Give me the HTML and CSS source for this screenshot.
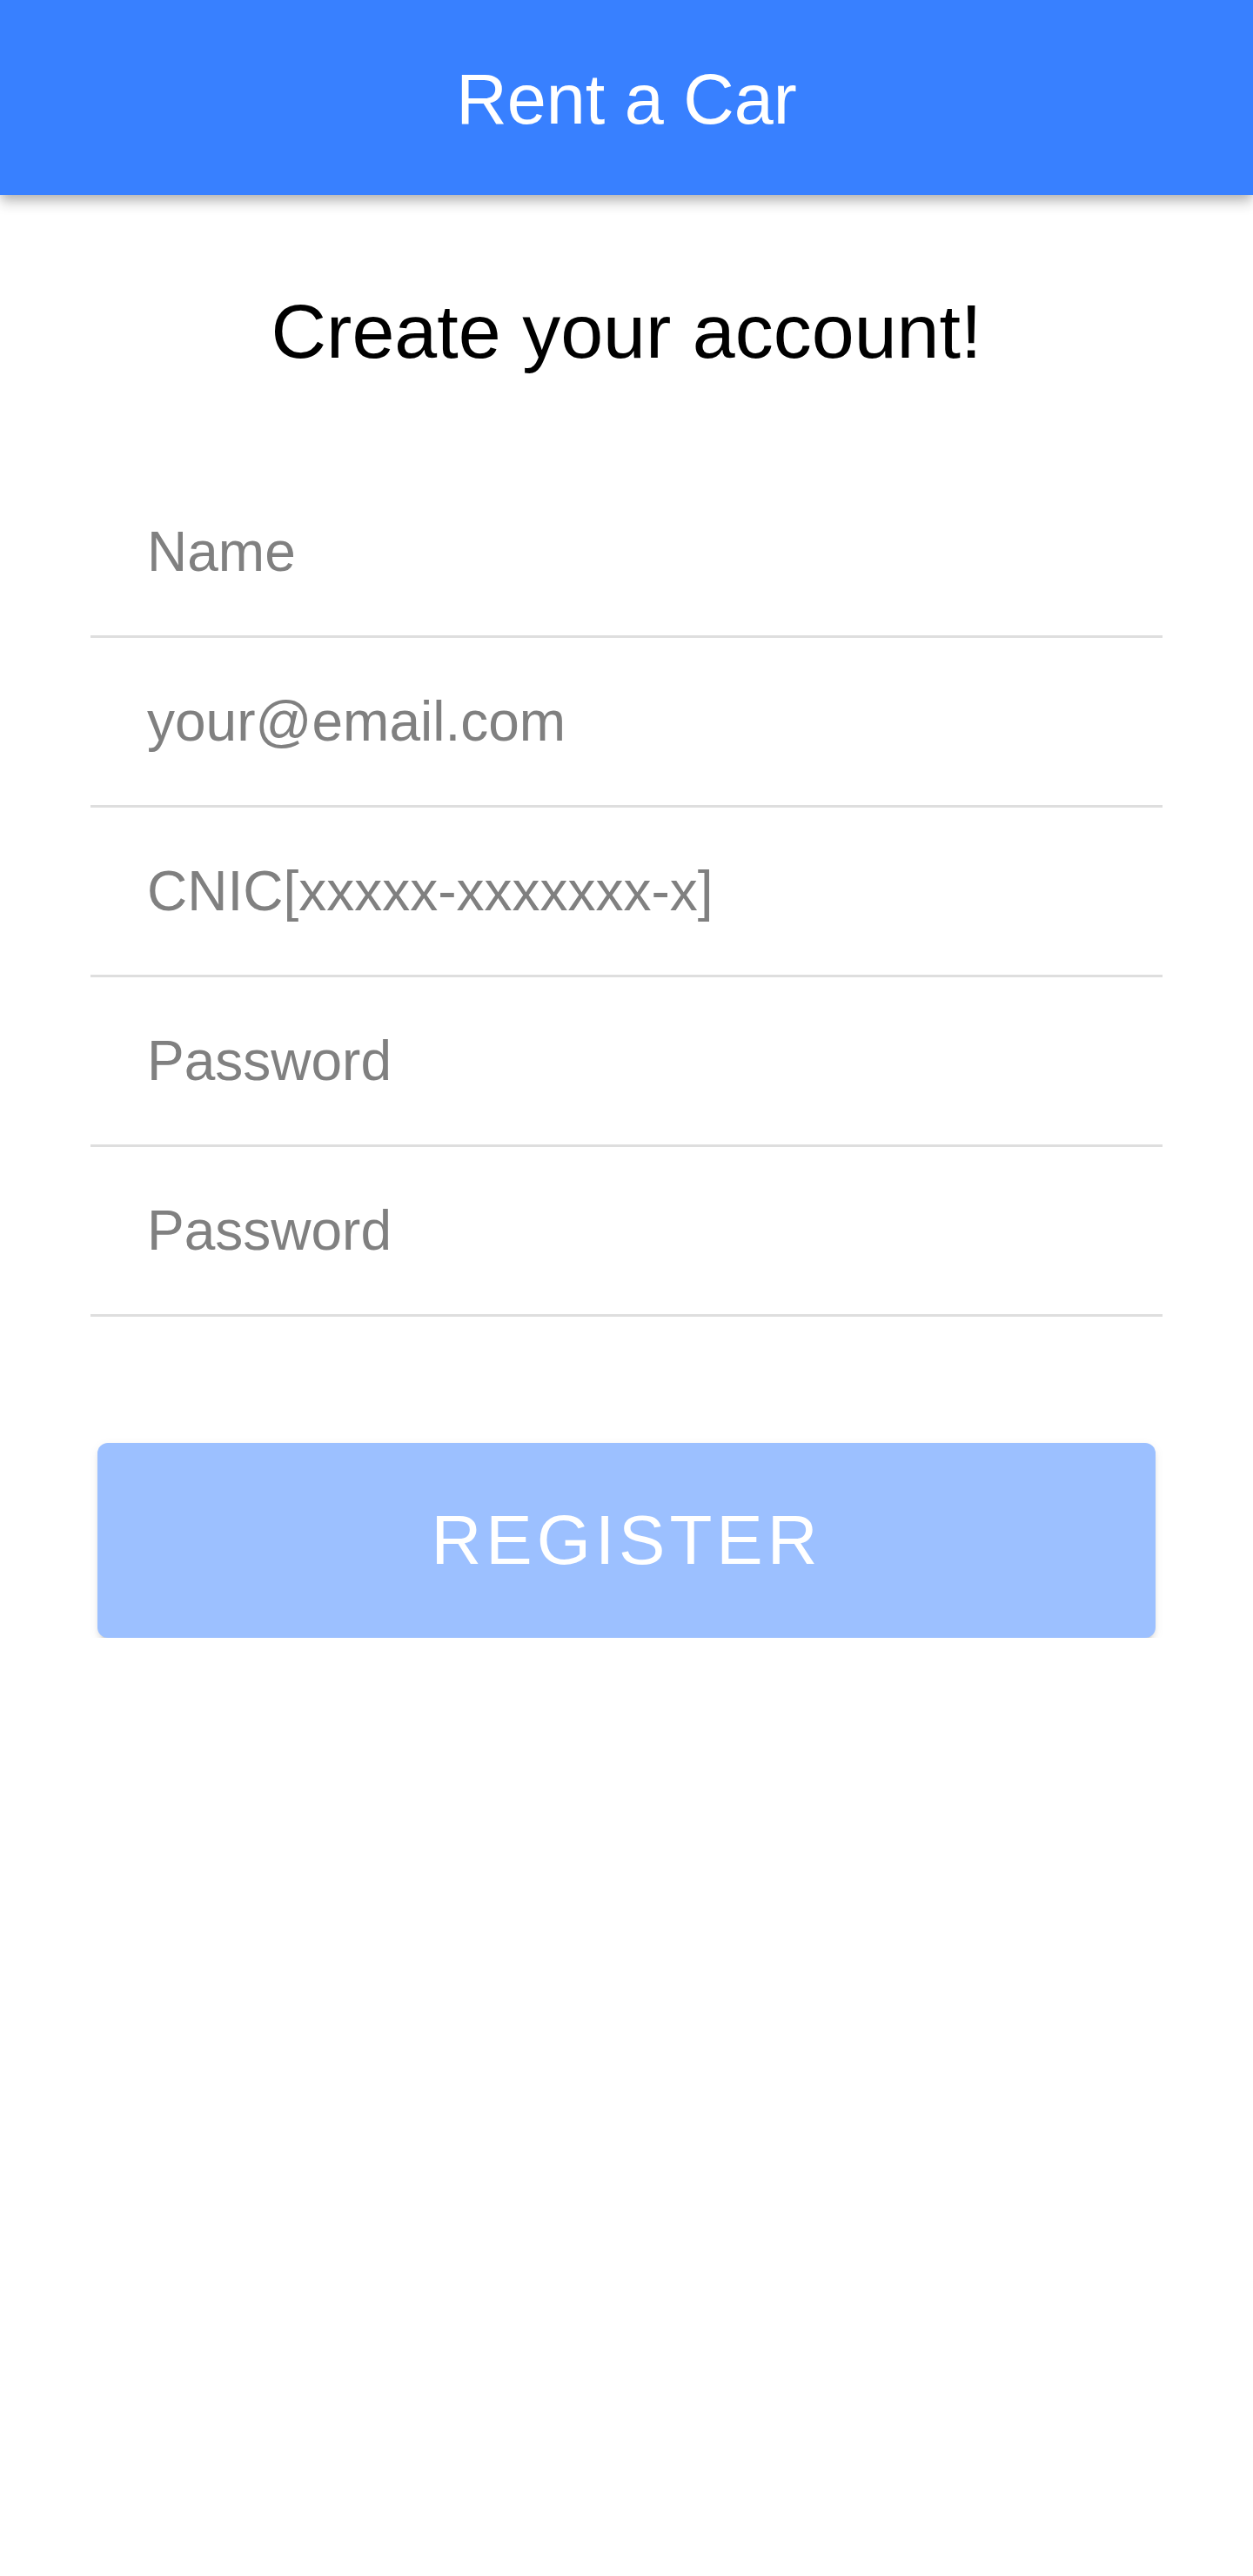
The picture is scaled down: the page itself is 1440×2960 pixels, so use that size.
FILE: index.html
```html
<!DOCTYPE html>
<html lang="en">
<head>
<meta charset="utf-8">
<title>Rent a Car</title>
<link rel="stylesheet" href="styles.css">
</head>
<body>
<header class="toolbar">
  <h1 class="toolbar-title">Rent a Car</h1>
</header>
<main class="content">
  <h2 class="heading">Create your account!</h2>
  <form class="form">
    <div class="item"><input class="field" type="text" placeholder="Name"></div>
    <div class="item"><input class="field" type="email" placeholder="your@email.com"></div>
    <div class="item"><input class="field" type="text" placeholder="CNIC[xxxxx-xxxxxxx-x]"></div>
    <div class="item"><input class="field" type="password" placeholder="Password"></div>
    <div class="item"><input class="field" type="password" placeholder="Password"></div>
    <button class="register" type="button" disabled>Register</button>
  </form>
</main>
</body>
</html>
```
FILE: styles.css
```css
* { box-sizing: border-box; }
html, body {
  margin: 0;
  padding: 0;
  background: #ffffff;
  font-family: "Liberation Sans", Arial, sans-serif;
}
.toolbar {
  height: 224px;
  background: #3880ff;
  display: flex;
  align-items: center;
  justify-content: center;
  padding-top: 5px;
  box-shadow: 0 5px 11px -3px rgba(0,0,0,0.2), 0 11px 13px 0 rgba(0,0,0,0.12), 0 3px 20px 0 rgba(0,0,0,0.08);
  position: relative;
  z-index: 2;
}
.toolbar-title {
  margin: 0;
  color: #ffffff;
  font-weight: 400;
  font-size: 81px;
  line-height: 1.15;
}
.content {
  width: 1232px;
  margin: 0 auto;
}
.heading {
  margin: 106px 0 0;
  text-align: center;
  font-weight: 400;
  font-size: 88px;
  line-height: 101px;
  color: #000000;
}
.form {
  margin-top: 107px;
  display: flex;
  flex-direction: column;
}
.item {
  height: 195px;
  border-bottom: 3px solid #dedede;
  display: flex;
  align-items: center;
  padding-left: 65px;
}
.field {
  width: 100%;
  border: none;
  outline: none;
  background: transparent;
  padding: 0;
  font-family: "Liberation Sans", Arial, sans-serif;
  font-size: 64px;
  line-height: 74px;
  height: 74px;
  color: #000;
}
.field::placeholder {
  color: #808080;
  opacity: 1;
}
.register {
  margin: 145px 8px 0;
  height: 224px;
  border: none;
  border-radius: 12px;
  background: #9cc0ff;
  color: #ffffff;
  font-family: "Liberation Sans", Arial, sans-serif;
  font-size: 80px;
  letter-spacing: 5px;
  text-transform: uppercase;
  box-shadow: 0 8px 3px -5px rgba(0,0,0,0.1), 0 5px 5px 0 rgba(0,0,0,0.07), 0 3px 13px 0 rgba(0,0,0,0.06);
}
```
